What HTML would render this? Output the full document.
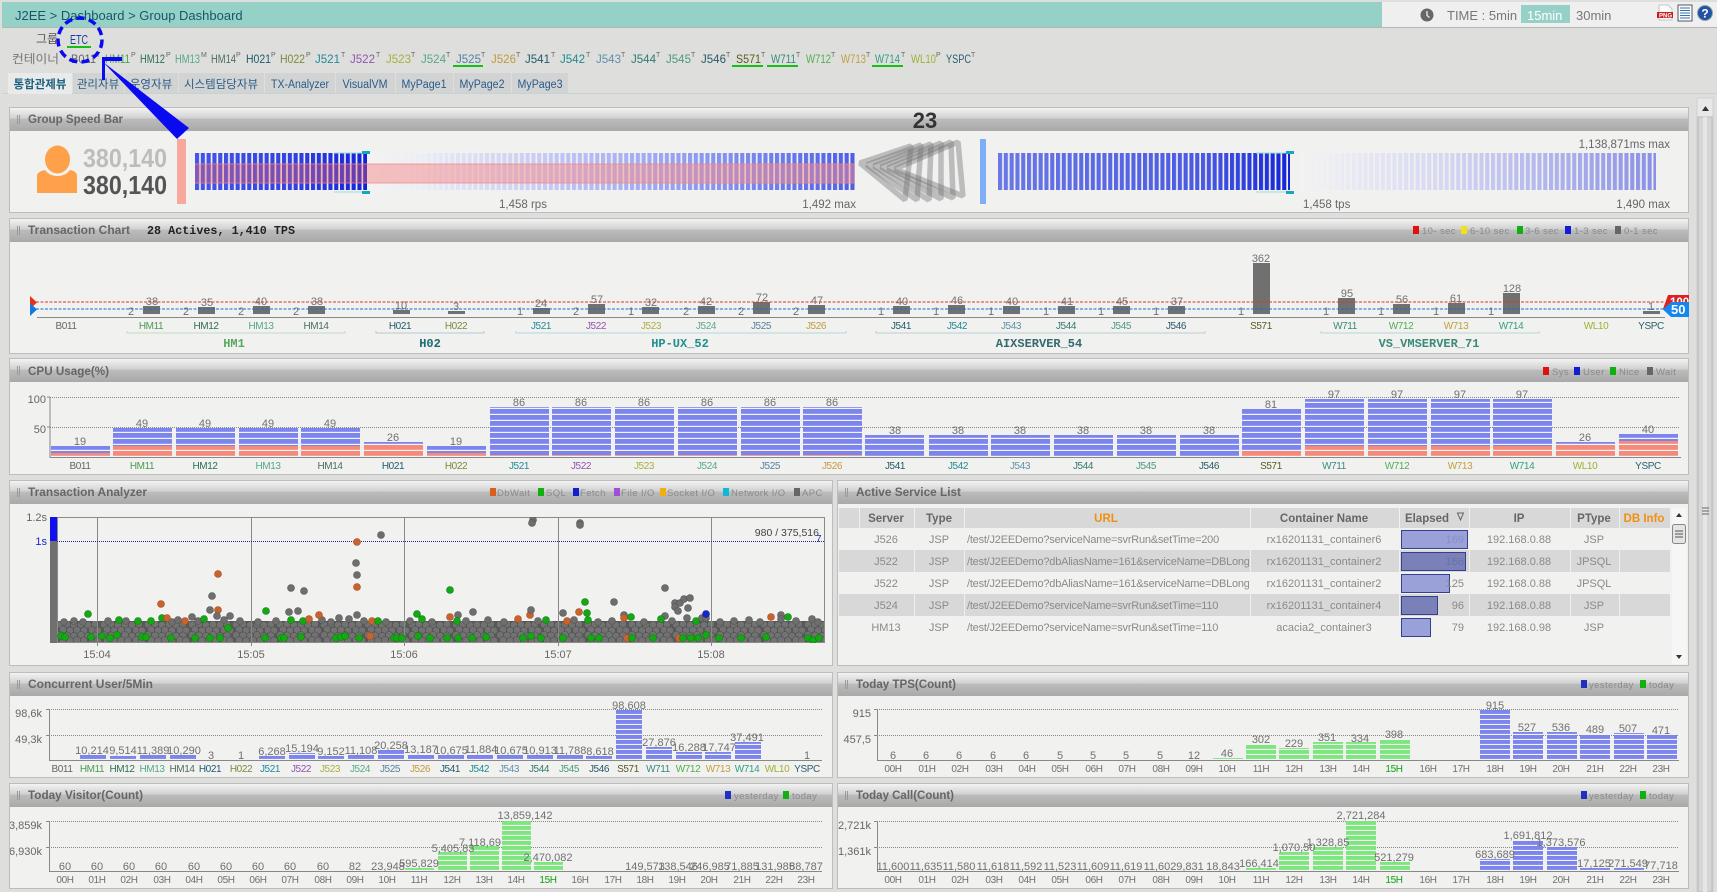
<!DOCTYPE html>
<html><head><meta charset="utf-8"><title>Group Dashboard</title>
<style>
html,body{margin:0;padding:0;background:#dededd;overflow:hidden}
svg{display:block}
text{font-family:"Liberation Sans","Noto Sans CJK KR",sans-serif;font-size:10.5px;fill:#666}
.t{font-size:12px;font-weight:bold;fill:#666}
.m{text-anchor:middle}.e{text-anchor:end}
.v{text-anchor:middle;font-size:11px;fill:#707070}
.a{text-anchor:middle;font-size:10px;letter-spacing:-.4px;fill:#707070}
.l{font-size:9.5px;letter-spacing:.4px;fill:#8a8a8a}
.s{font-size:7px}
.g13{font-size:13px}
.mono{font-family:"Liberation Mono",monospace;font-weight:bold;font-size:12px}
.gp{font-family:"Liberation Mono",monospace;font-weight:bold;font-size:12px;text-anchor:middle}
.td{font-size:11px;fill:#8a8a8a}
.url{letter-spacing:-.22px}
.th{font-size:11.5px;font-weight:bold;fill:#666;text-anchor:middle}
.k,.g,.o,.b{r:3.5px;stroke-width:.6}
.k{fill:#6e6e6e;stroke:#555}.g{fill:#14a814;stroke:#0c800c}.o{fill:#c8622e;stroke:#a64e22}.b{fill:#1428c8;stroke:#101c90}
</style></head><body>
<svg xmlns="http://www.w3.org/2000/svg" width="1717" height="892" viewBox="0 0 1717 892">
<defs>
<linearGradient id="hd" x1="0" y1="0" x2="0" y2="1"><stop offset="0" stop-color="#f3f3f3"/><stop offset=".46" stop-color="#cfcfcf"/><stop offset=".47" stop-color="#bcbcbc"/><stop offset="1" stop-color="#a9a9a9"/></linearGradient>
<linearGradient id="lb1"><stop offset="0" stop-color="#4454ea"/><stop offset=".6" stop-color="#2f3fe2"/><stop offset="1" stop-color="#1222da"/></linearGradient>
<linearGradient id="lb2"><stop offset="0" stop-color="#f3f3f3"/><stop offset=".1" stop-color="#eceef6"/><stop offset=".35" stop-color="#c8ccf5"/><stop offset=".7" stop-color="#8a96f0"/><stop offset="1" stop-color="#4d5ee8"/></linearGradient>
<linearGradient id="rb1"><stop offset="0" stop-color="#6a78e6"/><stop offset=".7" stop-color="#4a5ae2"/><stop offset="1" stop-color="#1424d8"/></linearGradient>
<linearGradient id="rb2"><stop offset="0" stop-color="#f3f3f3"/><stop offset=".1" stop-color="#ececf4"/><stop offset=".4" stop-color="#d6d8f2"/><stop offset="1" stop-color="#8a90e6"/></linearGradient>
<pattern id="gapL" patternUnits="userSpaceOnUse" x="195" y="0" width="5.8" height="10"><rect x="4.1" width="1.7" height="10" fill="#f1f1f0"/></pattern>
<pattern id="gapR" patternUnits="userSpaceOnUse" x="998" y="0" width="5.8" height="10"><rect x="4.1" width="1.7" height="10" fill="#f1f1f0"/></pattern>
<pattern id="bu6" patternUnits="userSpaceOnUse" x="0" y="457" width="10" height="6"><rect width="10" height="6" fill="#7c85ee"/><rect y="4.8" width="10" height="1.2" fill="#f4f4f4"/></pattern>
<pattern id="re6" patternUnits="userSpaceOnUse" x="0" y="457" width="10" height="6"><rect width="10" height="6" fill="#f58a7a"/><rect y="4.8" width="10" height="1.2" fill="#f4f4f4"/></pattern>
<pattern id="bu5" patternUnits="userSpaceOnUse" x="0" y="760" width="10" height="5"><rect width="10" height="5" fill="#7c85ee"/><rect y="3.9" width="10" height="1.1" fill="#f4f4f4"/></pattern>
<pattern id="gr5" patternUnits="userSpaceOnUse" x="0" y="760" width="10" height="5"><rect width="10" height="5" fill="#7ee67e"/><rect y="3.9" width="10" height="1.1" fill="#f4f4f4"/></pattern>
<pattern id="bu5b" patternUnits="userSpaceOnUse" x="0" y="871" width="10" height="5"><rect width="10" height="5" fill="#7c85ee"/><rect y="3.9" width="10" height="1.1" fill="#f4f4f4"/></pattern>
<pattern id="gr5b" patternUnits="userSpaceOnUse" x="0" y="871" width="10" height="5"><rect width="10" height="5" fill="#7ee67e"/><rect y="3.9" width="10" height="1.1" fill="#f4f4f4"/></pattern>
<pattern id="band" patternUnits="userSpaceOnUse" x="57" y="621" width="44" height="22">
<rect width="44" height="22" fill="#585858"/>
<g fill="#727272" stroke="#505050" stroke-width=".6">
<circle cx="3" cy="3.500" r="3.600"/><circle cx="10" cy="3" r="3.600"/><circle cx="17" cy="4" r="3.600"/><circle cx="24" cy="3.500" r="3.600"/><circle cx="31" cy="4" r="3.600"/><circle cx="38" cy="3" r="3.600"/>
<circle cx="6" cy="8.500" r="3.600"/><circle cx="13" cy="9.500" r="3.600"/><circle cx="20" cy="9" r="3.600"/><circle cx="27" cy="9.500" r="3.600"/><circle cx="35" cy="9" r="3.600"/><circle cx="41" cy="9.500" r="3.600"/>
<circle cx="3" cy="14" r="3.600"/><circle cx="10" cy="14.500" r="3.600"/><circle cx="17" cy="15" r="3.600"/><circle cx="24" cy="14" r="3.600"/><circle cx="31" cy="15" r="3.600"/><circle cx="38" cy="14.500" r="3.600"/>
<circle cx="6" cy="19" r="3.600"/><circle cx="13" cy="19.500" r="3.600"/><circle cx="20" cy="19" r="3.600"/><circle cx="27" cy="19.500" r="3.600"/><circle cx="35" cy="19" r="3.600"/><circle cx="41" cy="19.500" r="3.600"/>
</g></pattern>
<clipPath id="cL"><rect x="10" y="700" width="100" height="190"/></clipPath>
<clipPath id="cR"><rect x="838" y="780" width="100" height="110"/></clipPath>
<clipPath id="cU"><rect x="964" y="508" width="285" height="140"/></clipPath>
<clipPath id="cP"><rect x="57" y="517" width="768" height="126"/></clipPath>
</defs>

<!-- top bar -->
<rect x="0" y="0" width="1717" height="892" fill="#dededd"/>
<rect x="2" y="2" width="1380" height="25" fill="#96d1c7"/>
<rect x="1382" y="2" width="335" height="25" fill="#efefef"/>
<rect x="2" y="27" width="1715" height="1" fill="#b5b5b5"/>
<text x="15" y="20" class="g13" style="fill:#15586c">J2EE &gt; Dashboard &gt; Group Dashboard</text>
<circle cx="1427" cy="15" r="6.5" fill="#666"/><path d="M1427 11v4.5l2.5 2" stroke="#eee" stroke-width="1.3" fill="none"/>
<text x="1447" y="20" class="g13" style="fill:#777">TIME : 5min</text>
<rect x="1521" y="5" width="49" height="18" fill="#96d1c7"/>
<text x="1527" y="20" class="g13" style="fill:#fff">15min</text>
<text x="1576" y="20" class="g13" style="fill:#777">30min</text>
<path d="M1659 5h9l4 4v11h-13z" fill="#fafafa" stroke="#bbb" stroke-width=".8"/>
<rect x="1657" y="12" width="16" height="6" fill="#c81e1e"/>
<text x="1659" y="17.5" style="font-size:6px;font-weight:bold;fill:#fff">PNG</text>
<rect x="1678" y="5" width="14" height="16" fill="#fbfbfb" stroke="#445" stroke-width=".9"/>
<path d="M1680 8h10M1680 10.5h10M1680 13h10M1680 15.5h10M1680 18h10" stroke="#3a70b0" stroke-width="1"/>
<circle cx="1705" cy="13" r="7.5" fill="#2450a8" stroke="#8aa" stroke-width="1"/>
<text x="1705" y="17.5" class="m" style="font-size:12px;font-weight:bold;fill:#fff">?</text>

<!-- group row -->
<text x="36" y="43" style="font-size:12px;fill:#555">그룹</text>
<text x="70" y="44" style="font-size:13px;fill:#1a3fa0" textLength="18" lengthAdjust="spacingAndGlyphs">ETC</text>
<rect x="67" y="46" width="24" height="2" fill="#14c014"/>

<!-- container row -->
<g style="font-size:12px">
<text x="12" y="63" style="font-size:12px;fill:#777" textLength="47" lengthAdjust="spacingAndGlyphs">컨테이너</text>
<text x="71" y="63" style="font-size:12px;fill:#666" textLength="25" lengthAdjust="spacingAndGlyphs">B011</text><text x="96" y="57" class="s">T</text>
<text x="105" y="63" style="font-size:12px;fill:#4c9b50" textLength="25" lengthAdjust="spacingAndGlyphs">HM11</text><text x="131" y="57" class="s">P</text>
<text x="140" y="63" style="font-size:12px;fill:#2e6e55" textLength="25" lengthAdjust="spacingAndGlyphs">HM12</text><text x="166" y="57" class="s">P</text>
<text x="175" y="63" style="font-size:12px;fill:#55a88a" textLength="25" lengthAdjust="spacingAndGlyphs">HM13</text><text x="201" y="57" class="s">M</text>
<text x="211" y="63" style="font-size:12px;fill:#4e6e62" textLength="25" lengthAdjust="spacingAndGlyphs">HM14</text><text x="236" y="57" class="s">P</text>
<text x="246" y="63" style="font-size:12px;fill:#1e5a6e" textLength="25" lengthAdjust="spacingAndGlyphs">H021</text><text x="271" y="57" class="s">P</text>
<text x="280" y="63" style="font-size:12px;fill:#7a8a3a" textLength="25" lengthAdjust="spacingAndGlyphs">H022</text><text x="306" y="57" class="s">P</text>
<text x="315" y="63" style="font-size:12px;fill:#1e8a9a" textLength="25" lengthAdjust="spacingAndGlyphs">J521</text><text x="341" y="57" class="s">T</text>
<text x="350" y="63" style="font-size:12px;fill:#9055b0" textLength="25" lengthAdjust="spacingAndGlyphs">J522</text><text x="376" y="57" class="s">T</text>
<text x="386" y="63" style="font-size:12px;fill:#a8b040" textLength="25" lengthAdjust="spacingAndGlyphs">J523</text><text x="411" y="57" class="s">T</text>
<text x="421" y="63" style="font-size:12px;fill:#58a888" textLength="25" lengthAdjust="spacingAndGlyphs">J524</text><text x="446" y="57" class="s">T</text>
<text x="456" y="63" style="font-size:12px;fill:#5580a0" textLength="25" lengthAdjust="spacingAndGlyphs">J525</text><text x="481" y="57" class="s">T</text>
<text x="491" y="63" style="font-size:12px;fill:#c09a40" textLength="25" lengthAdjust="spacingAndGlyphs">J526</text><text x="516" y="57" class="s">T</text>
<text x="525" y="63" style="font-size:12px;fill:#1e5a68" textLength="25" lengthAdjust="spacingAndGlyphs">J541</text><text x="551" y="57" class="s">T</text>
<text x="560" y="63" style="font-size:12px;fill:#1e8a90" textLength="25" lengthAdjust="spacingAndGlyphs">J542</text><text x="586" y="57" class="s">T</text>
<text x="596" y="63" style="font-size:12px;fill:#5f90a8" textLength="25" lengthAdjust="spacingAndGlyphs">J543</text><text x="621" y="57" class="s">T</text>
<text x="631" y="63" style="font-size:12px;fill:#2e7a70" textLength="25" lengthAdjust="spacingAndGlyphs">J544</text><text x="656" y="57" class="s">T</text>
<text x="666" y="63" style="font-size:12px;fill:#4a9a80" textLength="25" lengthAdjust="spacingAndGlyphs">J545</text><text x="691" y="57" class="s">T</text>
<text x="701" y="63" style="font-size:12px;fill:#285a68" textLength="25" lengthAdjust="spacingAndGlyphs">J546</text><text x="726" y="57" class="s">T</text>
<text x="736" y="63" style="font-size:12px;fill:#5a5a20" textLength="25" lengthAdjust="spacingAndGlyphs">S571</text><text x="761" y="57" class="s">T</text>
<text x="771" y="63" style="font-size:12px;fill:#3a8a80" textLength="25" lengthAdjust="spacingAndGlyphs">W711</text><text x="796" y="57" class="s">T</text>
<text x="806" y="63" style="font-size:12px;fill:#50b050" textLength="25" lengthAdjust="spacingAndGlyphs">W712</text><text x="831" y="57" class="s">T</text>
<text x="841" y="63" style="font-size:12px;fill:#c0a040" textLength="25" lengthAdjust="spacingAndGlyphs">W713</text><text x="866" y="57" class="s">T</text>
<text x="875" y="63" style="font-size:12px;fill:#30a080" textLength="25" lengthAdjust="spacingAndGlyphs">W714</text><text x="901" y="57" class="s">T</text>
<text x="911" y="63" style="font-size:12px;fill:#a0b030" textLength="25" lengthAdjust="spacingAndGlyphs">WL10</text><text x="936" y="57" class="s">P</text>
<text x="946" y="63" style="font-size:12px;fill:#2a6070" textLength="25" lengthAdjust="spacingAndGlyphs">YSPC</text><text x="971" y="57" class="s">T</text>
</g>
<rect x="453" y="65" width="30" height="2" fill="#14c014"/><rect x="732" y="65" width="31" height="2" fill="#14c014"/><rect x="767" y="65" width="31" height="2" fill="#14c014"/><rect x="872" y="65" width="31" height="2" fill="#14c014"/>

<!-- tabs -->
<rect x="2" y="93" width="1715" height="1" fill="#c6d2d6"/>
<rect x="8" y="73" width="64" height="21" fill="#e9ebeb"/>
<rect x="73" y="73" width="51" height="20" fill="#d2d4d4"/><rect x="125" y="73" width="53" height="20" fill="#d2d4d4"/><rect x="179" y="73" width="85" height="20" fill="#d2d4d4"/><rect x="265" y="73" width="70" height="20" fill="#d2d4d4"/><rect x="336" y="73" width="59" height="20" fill="#d2d4d4"/><rect x="396" y="73" width="57" height="20" fill="#d2d4d4"/><rect x="454" y="73" width="57" height="20" fill="#d2d4d4"/><rect x="512" y="73" width="56" height="20" fill="#d2d4d4"/>
<g style="font-size:11.5px">
<text x="40" y="88" class="m" style="font-size:11.5px;font-weight:bold;fill:#1d6080">통합관제뷰</text>
<text x="98" y="88" class="m" style="font-size:11.5px;fill:#2a5a88">관리자뷰</text>
<text x="151" y="88" class="m" style="font-size:11.5px;fill:#2a5a88">운영자뷰</text>
<text x="221" y="88" class="m" style="font-size:11.5px;fill:#2a5a88">시스템담당자뷰</text>
<text x="300" y="88" class="m" style="font-size:11.5px;fill:#2a5a88" textLength="58" lengthAdjust="spacingAndGlyphs">TX-Analyzer</text>
<text x="365" y="88" class="m" style="font-size:11.5px;fill:#2a5a88" textLength="45" lengthAdjust="spacingAndGlyphs">VisualVM</text>
<text x="424" y="88" class="m" style="font-size:11.5px;fill:#2a5a88" textLength="45" lengthAdjust="spacingAndGlyphs">MyPage1</text>
<text x="482" y="88" class="m" style="font-size:11.5px;fill:#2a5a88" textLength="45" lengthAdjust="spacingAndGlyphs">MyPage2</text>
<text x="540" y="88" class="m" style="font-size:11.5px;fill:#2a5a88" textLength="45" lengthAdjust="spacingAndGlyphs">MyPage3</text>
</g>

<!-- outer scrollbar -->
<rect x="1697" y="98" width="16" height="794" fill="#e8e8e8" stroke="#cfcfcf"/>
<path d="M1702 111l3.5-5 3.5 5z" fill="#333"/>
<rect x="1698" y="117" width="14" height="775" fill="#d6d6d6" stroke="#bbb"/>
<rect x="1703" y="117" width="4" height="775" fill="#e6e6e6"/>
<path d="M1702 508h7M1702 511h7M1702 514h7" stroke="#666" stroke-width="1"/>

<!-- panels -->
<g stroke="#bdbdbd" fill="#f1f1f0">
<rect x="9.5" y="107.5" width="1679" height="105"/>
<rect x="9.5" y="218.5" width="1679" height="135"/>
<rect x="9.5" y="358.5" width="1679" height="116"/>
<rect x="9.5" y="480.5" width="823" height="185"/>
<rect x="837.5" y="480.5" width="851" height="185"/>
<rect x="9.5" y="672.5" width="823" height="105"/>
<rect x="837.5" y="672.5" width="851" height="105"/>
<rect x="9.5" y="783.5" width="823" height="105"/>
<rect x="837.5" y="783.5" width="851" height="105"/>
</g>
<g fill="url(#hd)">
<rect x="10" y="108" width="1678" height="23"/>
<rect x="10" y="219" width="1678" height="23"/>
<rect x="10" y="359" width="1678" height="23"/>
<rect x="10" y="481" width="822" height="23"/>
<rect x="838" y="481" width="850" height="23"/>
<rect x="10" y="673" width="822" height="23"/>
<rect x="838" y="673" width="850" height="23"/>
<rect x="10" y="784" width="822" height="23"/>
<rect x="838" y="784" width="850" height="23"/>
</g>
<g stroke="#999" stroke-width="1">
<path d="M17.5 115v9M19.5 115v9M17.5 226v9M19.5 226v9M17.5 366v9M19.5 366v9M17.5 488v9M19.5 488v9M17.5 680v9M19.5 680v9M17.5 791v9M19.5 791v9M845.5 488v9M847.5 488v9M845.5 680v9M847.5 680v9M845.5 791v9M847.5 791v9"/>
</g>
<text x="28" y="123" class="t" textLength="95" lengthAdjust="spacingAndGlyphs">Group Speed Bar</text>
<text x="28" y="234" class="t" textLength="102" lengthAdjust="spacingAndGlyphs">Transaction Chart</text>
<text x="147" y="234" class="mono" style="fill:#222" textLength="148" lengthAdjust="spacingAndGlyphs">28 Actives, 1,410 TPS</text>
<text x="28" y="375" class="t" textLength="81" lengthAdjust="spacingAndGlyphs">CPU Usage(%)</text>
<text x="28" y="496" class="t" textLength="119" lengthAdjust="spacingAndGlyphs">Transaction Analyzer</text>
<text x="856" y="496" class="t" textLength="105" lengthAdjust="spacingAndGlyphs">Active Service List</text>
<text x="28" y="688" class="t" textLength="125" lengthAdjust="spacingAndGlyphs">Concurrent User/5Min</text>
<text x="856" y="688" class="t" textLength="100" lengthAdjust="spacingAndGlyphs">Today TPS(Count)</text>
<text x="28" y="799" class="t" textLength="115" lengthAdjust="spacingAndGlyphs">Today Visitor(Count)</text>
<text x="856" y="799" class="t" textLength="98" lengthAdjust="spacingAndGlyphs">Today Call(Count)</text>

<!-- Speed bar -->
<ellipse cx="57.5" cy="159.5" rx="12.5" ry="14" fill="#ffa04a"/>
<path d="M37 193v-17c0-3 3-5 8-6 3 4 7 6 12.500 6s9.500-2 12.500-6c5 1 7 3 7 6v17z" fill="#ffa04a"/>
<text x="83" y="167" style="font-size:26px;font-weight:bold;fill:#bdbdbd" textLength="84" lengthAdjust="spacingAndGlyphs">380,140</text>
<text x="83" y="194" style="font-size:26px;font-weight:bold;fill:#555" textLength="84" lengthAdjust="spacingAndGlyphs">380,140</text>
<rect x="177" y="139" width="9" height="65" fill="#f9a89e"/>
<rect x="195" y="153" width="172" height="37" fill="url(#lb1)"/>
<rect x="367" y="153" width="488" height="37" fill="url(#lb2)"/>
<rect x="195" y="153" width="660" height="37" fill="url(#gapL)"/>
<rect x="195" y="164" width="172" height="19" fill="#f06060" fill-opacity=".38"/>
<rect x="367" y="164" width="488" height="19" fill="#f58c8c" fill-opacity=".5"/>
<path d="M195 164h660M195 183h660" stroke="#e88" stroke-width=".8"/>
<rect x="362" y="151" width="8" height="3" fill="#14a8b8"/><rect x="362" y="191" width="8" height="3" fill="#14a8b8"/>
<path d="M334 153h28M334 192h28" stroke="#9adde0" stroke-width="1"/>
<text x="499" y="208" style="font-size:11.5px">1,458 rps</text>
<text x="856" y="208" class="e" style="font-size:11.5px">1,492 max</text>
<g fill="none" stroke="#6e6e6e" stroke-opacity=".4" stroke-width="5.5" stroke-linejoin="bevel">
<path d="M860 163L911 146L905 200Z"/>
<path d="M867 165L921 145L917 200Z"/>
<path d="M874 166L931 144L929 200Z"/>
<path d="M881 167L941 143L941 199Z"/>
<path d="M888 168L951 142L953 198Z"/>
<path d="M895 169L958 142L963 196Z"/>
</g>
<text x="925" y="128" class="m" style="font-size:22px;font-weight:bold;fill:#333">23</text>
<rect x="980" y="139" width="6" height="65" fill="#80aef5"/>
<rect x="998" y="153" width="292" height="37" fill="url(#rb1)"/>
<rect x="1300" y="153" width="356" height="37" fill="url(#rb2)"/>
<rect x="998" y="153" width="658" height="37" fill="url(#gapR)"/>
<rect x="1286" y="151" width="8" height="3" fill="#14a8b8"/><rect x="1286" y="191" width="8" height="3" fill="#14a8b8"/>
<path d="M1256 153h30M1256 192h30" stroke="#9adde0" stroke-width="1"/>
<text x="1670" y="148" class="e" style="font-size:11.5px">1,138,871ms max</text>
<text x="1303" y="208" style="font-size:11.5px">1,458 tps</text>
<text x="1670" y="208" class="e" style="font-size:11.5px">1,490 max</text>

<!-- Transaction chart legend -->
<rect x="1413" y="226" width="6" height="8" fill="#e01010"/><text x="1422" y="234" class="l">10- sec</text>
<rect x="1461" y="226" width="6" height="8" fill="#f0e020"/><text x="1470" y="234" class="l">6-10 sec</text>
<rect x="1517" y="226" width="6" height="8" fill="#10b010"/><text x="1525" y="234" class="l">3-6 sec</text>
<rect x="1565" y="226" width="6" height="8" fill="#1020d0"/><text x="1574" y="234" class="l">1-3 sec</text>
<rect x="1615" y="226" width="6" height="8" fill="#666"/><text x="1624" y="234" class="l">0-1 sec</text>

<!-- Transaction bars -->
<g fill="#707070">
<rect x="143" y="306" width="17" height="8"/><rect x="198" y="307" width="17" height="7"/><rect x="253" y="306" width="17" height="8"/><rect x="308" y="306" width="17" height="8"/>
<rect x="393" y="310" width="17" height="4"/><rect x="448" y="311" width="17" height="3"/>
<rect x="533" y="308" width="17" height="6"/><rect x="588" y="304" width="17" height="10"/><rect x="642" y="307" width="17" height="7"/><rect x="698" y="306" width="17" height="8"/><rect x="753" y="302" width="17" height="12"/><rect x="808" y="305" width="17" height="9"/>
<rect x="893" y="306" width="17" height="8"/><rect x="948" y="305" width="17" height="9"/><rect x="1003" y="306" width="17" height="8"/><rect x="1058" y="306" width="17" height="8"/><rect x="1113" y="306" width="17" height="8"/><rect x="1168" y="306" width="17" height="8"/>
<rect x="1253" y="263" width="17" height="51"/><rect x="1338" y="298" width="17" height="16"/><rect x="1393" y="304" width="17" height="10"/><rect x="1448" y="303" width="17" height="11"/><rect x="1503" y="293" width="17" height="21"/><rect x="1643" y="311" width="17" height="3"/>
</g>
<g class="vals">
<text x="152" y="305" class="v">38</text><text x="207" y="306" class="v">35</text><text x="261" y="305" class="v">40</text><text x="317" y="305" class="v">38</text><text x="401" y="309" class="v">10</text><text x="456" y="310" class="v">3</text><text x="541" y="307" class="v">24</text><text x="597" y="303" class="v">57</text><text x="651" y="306" class="v">32</text><text x="706" y="305" class="v">42</text><text x="762" y="301" class="v">72</text><text x="817" y="304" class="v">47</text>
<text x="902" y="305" class="v">40</text><text x="957" y="304" class="v">46</text><text x="1012" y="305" class="v">40</text><text x="1067" y="305" class="v">41</text><text x="1122" y="305" class="v">45</text><text x="1177" y="305" class="v">37</text><text x="1261" y="262" class="v">362</text><text x="1347" y="297" class="v">95</text><text x="1402" y="303" class="v">56</text><text x="1456" y="302" class="v">61</text><text x="1512" y="292" class="v">128</text><text x="1651" y="310" class="v">1</text>
</g>
<g>
<text x="131" y="315" class="v">2</text><text x="186" y="315" class="v">2</text><text x="241" y="315" class="v">2</text><text x="296" y="315" class="v">2</text><text x="520" y="315" class="v">1</text><text x="576" y="315" class="v">2</text><text x="631" y="315" class="v">1</text><text x="686" y="315" class="v">2</text><text x="741" y="315" class="v">2</text><text x="796" y="315" class="v">2</text><text x="881" y="315" class="v">1</text><text x="936" y="315" class="v">1</text><text x="991" y="315" class="v">1</text><text x="1046" y="315" class="v">1</text><text x="1101" y="315" class="v">1</text><text x="1156" y="315" class="v">1</text><text x="1241" y="315" class="v">1</text><text x="1326" y="315" class="v">1</text><text x="1381" y="315" class="v">1</text><text x="1436" y="315" class="v">1</text><text x="1491" y="315" class="v">1</text>
</g>
<path d="M36 302H1664" stroke="#d0402a" stroke-width="1" stroke-dasharray="3 1.5"/>
<path d="M36 309H1664" stroke="#1a6ad0" stroke-width="1" stroke-dasharray="3 1.5"/>
<path d="M37 317.500H1665" stroke="#888" stroke-width="1"/>
<path d="M30 296l7 6.500-7 6.500z" fill="#e8301a"/><path d="M30 303l7 6.500-7 6.500z" fill="#1478e0"/>
<path d="M1668 295h21v14h-26z" fill="#e02020"/><text x="1670" y="306" style="font-size:11.5px;font-weight:bold;fill:#fff">100</text>
<path d="M1671 302h18v15h-18l-8-7.500z" fill="#1488ee"/><text x="1671" y="314" style="font-size:13px;font-weight:bold;fill:#fff">50</text>
<g>
<text x="66" y="329" class="a" style="fill:#666">B011</text><text x="151" y="329" class="a" style="fill:#4c9b50">HM11</text><text x="206" y="329" class="a" style="fill:#2e6e55">HM12</text><text x="261" y="329" class="a" style="fill:#55a88a">HM13</text><text x="316" y="329" class="a" style="fill:#4e6e62">HM14</text><text x="400" y="329" class="a" style="fill:#1e5a6e">H021</text><text x="456" y="329" class="a" style="fill:#7a8a3a">H022</text><text x="541" y="329" class="a" style="fill:#1e8a9a">J521</text><text x="596" y="329" class="a" style="fill:#9055b0">J522</text><text x="651" y="329" class="a" style="fill:#a8b040">J523</text><text x="706" y="329" class="a" style="fill:#58a888">J524</text><text x="761" y="329" class="a" style="fill:#5580a0">J525</text><text x="816" y="329" class="a" style="fill:#c09a40">J526</text><text x="901" y="329" class="a" style="fill:#1e5a68">J541</text><text x="957" y="329" class="a" style="fill:#1e8a90">J542</text><text x="1011" y="329" class="a" style="fill:#5f90a8">J543</text><text x="1066" y="329" class="a" style="fill:#2e7a70">J544</text><text x="1121" y="329" class="a" style="fill:#4a9a80">J545</text><text x="1176" y="329" class="a" style="fill:#285a68">J546</text><text x="1261" y="329" class="a" style="fill:#5a5a20">S571</text><text x="1345" y="329" class="a" style="fill:#3a8a80">W711</text><text x="1401" y="329" class="a" style="fill:#50b050">W712</text><text x="1456" y="329" class="a" style="fill:#c0a040">W713</text><text x="1511" y="329" class="a" style="fill:#30a080">W714</text><text x="1596" y="329" class="a" style="fill:#a0b030">WL10</text><text x="1651" y="329" class="a" style="fill:#2a6070">YSPC</text>
</g>
<g fill="none" stroke-width="1">
<path d="M127 331v2H345v-2" stroke="#c2dcc4"/><path d="M376 331v2H484v-2" stroke="#b6ccd0"/><path d="M516 331v2H846v-2" stroke="#b4d8dc"/><path d="M876 331v2H1205v-2" stroke="#bcd0d2"/><path d="M1321 331v2H1539v-2" stroke="#bcd8d2"/>
</g>
<text x="234" y="347" class="gp" style="fill:#58a860">HM1</text>
<text x="430" y="347" class="gp" style="fill:#1a6a70">H02</text>
<text x="680" y="347" class="gp" style="fill:#1e9090">HP-UX_52</text>
<text x="1039" y="347" class="gp" style="fill:#336a70">AIXSERVER_54</text>
<text x="1429" y="347" class="gp" style="fill:#3a8a78">VS_VMSERVER_71</text>

<!-- CPU -->
<rect x="1543" y="367" width="6" height="8" fill="#e01010"/><text x="1552" y="375" class="l">Sys</text>
<rect x="1574" y="367" width="6" height="8" fill="#1020d0"/><text x="1583" y="375" class="l">User</text>
<rect x="1610" y="367" width="6" height="8" fill="#10b010"/><text x="1619" y="375" class="l">Nice</text>
<rect x="1647" y="367" width="6" height="8" fill="#666"/><text x="1656" y="375" class="l">Wait</text>
<path d="M50 397.500H1680M50 427.500H1680" stroke="#888" stroke-width="1" stroke-dasharray="1 1"/>
<path d="M50 397V457.500H1681" stroke="#888" fill="none"/><path d="M47 397h3M47 427h3" stroke="#888"/>
<text x="46" y="403" class="e" style="font-size:11px">100</text><text x="46" y="433" class="e" style="font-size:11px">50</text>
<g fill="url(#bu6)">
<rect x="51" y="446" width="59" height="11"/><rect x="113" y="428" width="59" height="29"/><rect x="176" y="428" width="59" height="29"/><rect x="239" y="428" width="59" height="29"/><rect x="301" y="428" width="59" height="29"/><rect x="364" y="442" width="59" height="15"/><rect x="427" y="446" width="59" height="11"/><rect x="490" y="407" width="59" height="50"/><rect x="552" y="407" width="59" height="50"/><rect x="615" y="407" width="59" height="50"/><rect x="678" y="407" width="59" height="50"/><rect x="741" y="407" width="59" height="50"/><rect x="803" y="407" width="59" height="50"/><rect x="865" y="435" width="59" height="22"/><rect x="929" y="435" width="59" height="22"/><rect x="991" y="435" width="59" height="22"/><rect x="1054" y="435" width="59" height="22"/><rect x="1117" y="435" width="59" height="22"/><rect x="1180" y="435" width="59" height="22"/><rect x="1242" y="409" width="59" height="48"/><rect x="1305" y="399" width="59" height="58"/><rect x="1368" y="399" width="59" height="58"/><rect x="1431" y="399" width="59" height="58"/><rect x="1493" y="399" width="59" height="58"/><rect x="1556" y="442" width="59" height="15"/><rect x="1619" y="434" width="59" height="23"/>
</g>
<g fill="url(#re6)">
<rect x="51" y="453" width="59" height="4"/><rect x="113" y="446" width="59" height="11"/><rect x="176" y="446" width="59" height="11"/><rect x="239" y="446" width="59" height="11"/><rect x="301" y="446" width="59" height="11"/><rect x="364" y="444" width="59" height="13"/><rect x="427" y="453" width="59" height="4"/><rect x="490" y="455" width="59" height="2"/><rect x="552" y="455" width="59" height="2"/><rect x="615" y="455" width="59" height="2"/><rect x="678" y="455" width="59" height="2"/><rect x="741" y="455" width="59" height="2"/><rect x="803" y="455" width="59" height="2"/><rect x="1242" y="450" width="59" height="7"/><rect x="1305" y="446" width="59" height="11"/><rect x="1368" y="446" width="59" height="11"/><rect x="1431" y="446" width="59" height="11"/><rect x="1493" y="446" width="59" height="11"/><rect x="1556" y="444" width="59" height="13"/><rect x="1619" y="441" width="59" height="16"/>
</g>
<g>
<text x="80" y="445" class="v">19</text><text x="142" y="427" class="v">49</text><text x="205" y="427" class="v">49</text><text x="268" y="427" class="v">49</text><text x="330" y="427" class="v">49</text><text x="393" y="441" class="v">26</text><text x="456" y="445" class="v">19</text><text x="519" y="406" class="v">86</text><text x="581" y="406" class="v">86</text><text x="644" y="406" class="v">86</text><text x="707" y="406" class="v">86</text><text x="770" y="406" class="v">86</text><text x="832" y="406" class="v">86</text><text x="895" y="434" class="v">38</text><text x="958" y="434" class="v">38</text><text x="1020" y="434" class="v">38</text><text x="1083" y="434" class="v">38</text><text x="1146" y="434" class="v">38</text><text x="1209" y="434" class="v">38</text><text x="1271" y="408" class="v">81</text><text x="1334" y="398" class="v">97</text><text x="1397" y="398" class="v">97</text><text x="1460" y="398" class="v">97</text><text x="1522" y="398" class="v">97</text><text x="1585" y="441" class="v">26</text><text x="1648" y="433" class="v">40</text>
</g>
<g>
<text x="80" y="469" class="a" style="fill:#666">B011</text><text x="142" y="469" class="a" style="fill:#4c9b50">HM11</text><text x="205" y="469" class="a" style="fill:#2e6e55">HM12</text><text x="268" y="469" class="a" style="fill:#55a88a">HM13</text><text x="330" y="469" class="a" style="fill:#4e6e62">HM14</text><text x="393" y="469" class="a" style="fill:#1e5a6e">H021</text><text x="456" y="469" class="a" style="fill:#7a8a3a">H022</text><text x="519" y="469" class="a" style="fill:#1e8a9a">J521</text><text x="581" y="469" class="a" style="fill:#9055b0">J522</text><text x="644" y="469" class="a" style="fill:#a8b040">J523</text><text x="707" y="469" class="a" style="fill:#58a888">J524</text><text x="770" y="469" class="a" style="fill:#5580a0">J525</text><text x="832" y="469" class="a" style="fill:#c09a40">J526</text><text x="895" y="469" class="a" style="fill:#1e5a68">J541</text><text x="958" y="469" class="a" style="fill:#1e8a90">J542</text><text x="1020" y="469" class="a" style="fill:#5f90a8">J543</text><text x="1083" y="469" class="a" style="fill:#2e7a70">J544</text><text x="1146" y="469" class="a" style="fill:#4a9a80">J545</text><text x="1209" y="469" class="a" style="fill:#285a68">J546</text><text x="1271" y="469" class="a" style="fill:#5a5a20">S571</text><text x="1334" y="469" class="a" style="fill:#3a8a80">W711</text><text x="1397" y="469" class="a" style="fill:#50b050">W712</text><text x="1460" y="469" class="a" style="fill:#c0a040">W713</text><text x="1522" y="469" class="a" style="fill:#30a080">W714</text><text x="1585" y="469" class="a" style="fill:#a0b030">WL10</text><text x="1648" y="469" class="a" style="fill:#2a6070">YSPC</text>
</g>

<!-- Transaction Analyzer -->
<rect x="490" y="488" width="6" height="8" fill="#d8601c"/><text x="497" y="496" class="l">DbWait</text>
<rect x="538" y="488" width="6" height="8" fill="#10b010"/><text x="546" y="496" class="l">SQL</text>
<rect x="573" y="488" width="6" height="8" fill="#1020d0"/><text x="580" y="496" class="l">Fetch</text>
<rect x="614" y="488" width="6" height="8" fill="#a050d8"/><text x="621" y="496" class="l">File I/O</text>
<rect x="660" y="488" width="6" height="8" fill="#f0b010"/><text x="667" y="496" class="l">Socket I/O</text>
<rect x="723" y="488" width="6" height="8" fill="#10b8d8"/><text x="731" y="496" class="l">Network I/O</text>
<rect x="794" y="488" width="6" height="8" fill="#666"/><text x="802" y="496" class="l">APC</text>
<rect x="57" y="621" width="768" height="22" fill="url(#band)"/>
<rect x="57.500" y="517.500" width="767" height="125" fill="none" stroke="#8a8a8a"/>
<rect x="50" y="517" width="7" height="24" fill="#1010f0"/><rect x="50" y="541" width="7" height="102" fill="#707070"/>
<path d="M97.500 517V646M251.500 517V646M404.500 517V646M558.500 517V646M711.500 517V646" stroke="#888" stroke-width="1"/>
<path d="M57 541.500H825" stroke="#2020a0" stroke-dasharray="1 1"/>
<text x="47" y="521" class="e" style="font-size:11px">1.2s</text>
<text x="47" y="545" class="e" style="font-size:11px;fill:#1428c8">1s</text>
<text x="97" y="658" class="m" style="font-size:11px">15:04</text><text x="251" y="658" class="m" style="font-size:11px">15:05</text><text x="404" y="658" class="m" style="font-size:11px">15:06</text><text x="558" y="658" class="m" style="font-size:11px">15:07</text><text x="711" y="658" class="m" style="font-size:11px">15:08</text>
<text x="819" y="536" class="e" style="font-size:10.5px;fill:#444">980 / 375,516</text>
<text x="816" y="542" style="font-size:10px;fill:#2233a0">7</text>
<g clip-path="url(#cP)">
<circle class="k" cx="64" cy="622"/><circle class="k" cx="74" cy="621"/><circle class="k" cx="83" cy="622"/><circle class="k" cx="108" cy="621"/><circle class="k" cx="126" cy="621"/><circle class="k" cx="172" cy="622"/><circle class="k" cx="178" cy="620"/><circle class="k" cx="198" cy="621"/><circle class="k" cx="224" cy="620"/><circle class="k" cx="240" cy="621"/><circle class="k" cx="258" cy="622"/><circle class="k" cx="276" cy="621"/><circle class="k" cx="322" cy="620"/><circle class="k" cx="331" cy="622"/><circle class="k" cx="364" cy="621"/><circle class="k" cx="386" cy="622"/><circle class="k" cx="410" cy="621"/><circle class="k" cx="432" cy="622"/><circle class="k" cx="466" cy="621"/><circle class="k" cx="488" cy="620"/><circle class="k" cx="504" cy="622"/><circle class="k" cx="538" cy="621"/><circle class="k" cx="574" cy="620"/><circle class="k" cx="598" cy="622"/><circle class="k" cx="612" cy="621"/><circle class="k" cx="644" cy="622"/><circle class="k" cx="672" cy="621"/><circle class="k" cx="720" cy="622"/><circle class="k" cx="734" cy="621"/><circle class="k" cx="760" cy="622"/><circle class="k" cx="796" cy="621"/><circle class="k" cx="818" cy="622"/>
<circle class="g" cx="88" cy="614"/><circle class="o" cx="161" cy="604"/><circle class="k" cx="212" cy="596"/><circle class="o" cx="218" cy="574"/><circle class="k" cx="210" cy="610"/><circle class="o" cx="218" cy="610"/><circle class="k" cx="217" cy="616"/><circle class="g" cx="162" cy="618"/><circle class="o" cx="167" cy="618"/><circle class="o" cx="185" cy="621"/><circle class="g" cx="204" cy="619"/><circle class="k" cx="192" cy="617"/><circle class="k" cx="230" cy="616"/><circle class="g" cx="119" cy="620"/><circle class="g" cx="138" cy="621"/><circle class="g" cx="151" cy="621"/><circle class="g" cx="266" cy="611"/><circle class="k" cx="289" cy="612"/><circle class="k" cx="298" cy="611"/><circle class="k" cx="291" cy="588"/><circle class="k" cx="304" cy="591"/><circle class="g" cx="291" cy="620"/><circle class="g" cx="303" cy="621"/><circle class="o" cx="309" cy="619"/><circle class="o" cx="319" cy="615"/><circle class="o" cx="357" cy="542"/><circle class="k" cx="381" cy="535"/><circle class="k" cx="356" cy="563"/><circle class="k" cx="357" cy="575"/><circle class="o" cx="357" cy="587"/><circle class="k" cx="357" cy="615"/><circle class="o" cx="372" cy="621"/><circle class="g" cx="378" cy="621"/><circle class="k" cx="339" cy="618"/><circle class="k" cx="349" cy="619"/><circle class="g" cx="417" cy="614"/><circle class="g" cx="422" cy="619"/><circle class="g" cx="450" cy="590"/><circle class="o" cx="450" cy="617"/><circle class="k" cx="458" cy="615"/><circle class="g" cx="457" cy="621"/><circle class="k" cx="473" cy="612"/><circle class="k" cx="533" cy="520"/><circle class="k" cx="532" cy="523"/><circle class="k" cx="580" cy="523"/><circle class="k" cx="580" cy="525"/><circle class="o" cx="518" cy="619"/><circle class="o" cx="530" cy="615"/><circle class="k" cx="531" cy="610"/><circle class="g" cx="546" cy="620"/><circle class="k" cx="563" cy="613"/><circle class="o" cx="579" cy="612"/><circle class="g" cx="587" cy="613"/><circle class="g" cx="588" cy="620"/><circle class="o" cx="567" cy="621"/><circle class="g" cx="585" cy="602"/><circle class="k" cx="614" cy="602"/><circle class="k" cx="624" cy="615"/><circle class="o" cx="624" cy="618"/><circle class="g" cx="631" cy="617"/><circle class="k" cx="665" cy="588"/><circle class="k" cx="665" cy="616"/><circle class="g" cx="661" cy="619"/><circle class="k" cx="675" cy="603"/><circle class="k" cx="675" cy="607"/><circle class="k" cx="680" cy="603"/><circle class="k" cx="684" cy="599"/><circle class="k" cx="690" cy="598"/><circle class="k" cx="688" cy="608"/><circle class="k" cx="678" cy="611"/><circle class="k" cx="687" cy="618"/><circle class="g" cx="696" cy="621"/><circle class="k" cx="702" cy="618"/><circle class="k" cx="706" cy="618"/><circle class="b" cx="706" cy="614"/><circle class="o" cx="771" cy="617"/><circle class="k" cx="781" cy="615"/><circle class="g" cx="788" cy="617"/><circle class="k" cx="781" cy="619"/><circle class="k" cx="749" cy="620"/><circle class="k" cx="812" cy="619"/>
<circle class="g" cx="228" cy="628"/><circle class="o" cx="370" cy="636"/><circle class="o" cx="627" cy="638"/><circle class="o" cx="679" cy="638"/>
<circle class="g" cx="61" cy="636"/><circle class="g" cx="65" cy="637"/><circle class="g" cx="91" cy="637"/><circle class="g" cx="102" cy="636"/><circle class="g" cx="110" cy="638"/><circle class="g" cx="117" cy="635"/><circle class="g" cx="142" cy="637"/><circle class="g" cx="146" cy="637"/><circle class="g" cx="171" cy="638"/><circle class="g" cx="195" cy="638"/><circle class="g" cx="210" cy="638"/><circle class="g" cx="220" cy="638"/><circle class="g" cx="265" cy="638"/><circle class="g" cx="281" cy="638"/><circle class="g" cx="284" cy="638"/><circle class="g" cx="301" cy="637"/><circle class="g" cx="336" cy="638"/><circle class="g" cx="341" cy="637"/><circle class="g" cx="345" cy="636"/><circle class="g" cx="359" cy="638"/><circle class="g" cx="394" cy="638"/><circle class="g" cx="397" cy="638"/><circle class="g" cx="402" cy="638"/><circle class="g" cx="418" cy="636"/><circle class="g" cx="430" cy="638"/><circle class="g" cx="447" cy="638"/><circle class="g" cx="458" cy="638"/><circle class="g" cx="472" cy="638"/><circle class="g" cx="486" cy="637"/><circle class="g" cx="523" cy="638"/><circle class="g" cx="531" cy="636"/><circle class="g" cx="541" cy="638"/><circle class="g" cx="563" cy="638"/><circle class="g" cx="591" cy="638"/><circle class="g" cx="599" cy="638"/><circle class="g" cx="632" cy="638"/><circle class="g" cx="653" cy="638"/><circle class="g" cx="683" cy="638"/><circle class="g" cx="691" cy="638"/><circle class="g" cx="698" cy="638"/><circle class="g" cx="706" cy="635"/><circle class="g" cx="719" cy="638"/><circle class="g" cx="741" cy="638"/><circle class="g" cx="766" cy="637"/><circle class="g" cx="808" cy="638"/><circle class="g" cx="813" cy="640"/><circle class="g" cx="819" cy="638"/>
</g>

<!-- Active Service List -->
<rect x="839" y="508" width="831" height="20" fill="#d8d8d8"/>
<rect x="839" y="550" width="831" height="22" fill="#d8d8d8"/><rect x="839" y="594" width="831" height="22" fill="#d8d8d8"/>
<path d="M859.500 508V528M914.500 508V638M964.500 508V638M1250.500 508V638M1399.500 508V638M1469.500 508V638M1570.500 508V638M1619.500 508V638" stroke="#f0f0f0" stroke-width="1"/>
<text x="886" y="522" class="th">Server</text><text x="939" y="522" class="th">Type</text>
<text x="1106" y="522" class="th" style="fill:#f09010">URL</text>
<text x="1324" y="522" class="th">Container Name</text>
<text x="1427" y="522" class="th">Elapsed</text><path d="M1457.500 513h6l-3 7z" fill="none" stroke="#666"/>
<text x="1519" y="522" class="th">IP</text><text x="1594" y="522" class="th">PType</text><text x="1644" y="522" class="th" style="fill:#f09010">DB Info</text>
<rect x="1401.500" y="530.500" width="66" height="18" fill="#9aa0d8" stroke="#34408f"/>
<rect x="1401.500" y="552.500" width="64" height="18" fill="#7a80b8" stroke="#34408f"/>
<rect x="1401.500" y="574.500" width="48" height="18" fill="#9aa0d8" stroke="#34408f"/>
<rect x="1401.500" y="596.500" width="36" height="18" fill="#7a80b8" stroke="#34408f"/>
<rect x="1401.500" y="618.500" width="29" height="18" fill="#9aa0d8" stroke="#34408f"/>
<g class="rows">
<text x="886" y="543" class="td m">J526</text><text x="939" y="543" class="td m">JSP</text>
<text x="886" y="565" class="td m">J522</text><text x="939" y="565" class="td m">JSP</text>
<text x="886" y="587" class="td m">J522</text><text x="939" y="587" class="td m">JSP</text>
<text x="886" y="609" class="td m">J524</text><text x="939" y="609" class="td m">JSP</text>
<text x="886" y="631" class="td m">HM13</text><text x="939" y="631" class="td m">JSP</text>
<g clip-path="url(#cU)">
<text x="967" y="543" class="td url">/test/J2EEDemo?serviceName=svrRun&amp;setTime=200</text>
<text x="967" y="565" class="td url">/test/J2EEDemo?dbAliasName=161&amp;serviceName=DBLongSql</text>
<text x="967" y="587" class="td url">/test/J2EEDemo?dbAliasName=161&amp;serviceName=DBLongSql</text>
<text x="967" y="609" class="td url">/test/J2EEDemo?serviceName=svrRun&amp;setTime=110</text>
<text x="967" y="631" class="td url">/test/J2EEDemo?serviceName=svrRun&amp;setTime=110</text>
</g>
<text x="1324" y="543" class="td m">rx16201131_container6</text><text x="1324" y="565" class="td m">rx16201131_container2</text><text x="1324" y="587" class="td m">rx16201131_container2</text><text x="1324" y="609" class="td m">rx16201131_container4</text><text x="1324" y="631" class="td m">acacia2_container3</text>
<text x="1464" y="543" class="td e" style="fill:#8a8fc0">169</text><text x="1464" y="565" class="td e" style="fill:#6a70a8">166</text><text x="1464" y="587" class="td e">125</text><text x="1464" y="609" class="td e">96</text><text x="1464" y="631" class="td e">79</text>
<text x="1519" y="543" class="td m">192.168.0.88</text><text x="1519" y="565" class="td m">192.168.0.88</text><text x="1519" y="587" class="td m">192.168.0.88</text><text x="1519" y="609" class="td m">192.168.0.88</text><text x="1519" y="631" class="td m">192.168.0.98</text>
<text x="1594" y="543" class="td m">JSP</text><text x="1594" y="565" class="td m">JPSQL</text><text x="1594" y="587" class="td m">JPSQL</text><text x="1594" y="609" class="td m">JSP</text><text x="1594" y="631" class="td m">JSP</text>
</g>
<rect x="1672" y="508" width="14" height="156" fill="#f6f6f6"/>
<path d="M1676 517l3-4 3 4z" fill="#333"/><path d="M1676 655l3 4 3-4z" fill="#333"/>
<rect x="1672.500" y="524.500" width="13" height="19" rx="2" fill="#e4e4e4" stroke="#888"/>
<path d="M1675 531h8M1675 534h8M1675 537h8" stroke="#555"/>

<!-- Concurrent -->
<path d="M49 709.500H822M49 735.500H822" stroke="#888" stroke-dasharray="1 1"/>
<path d="M49.500 709V760.500H822" stroke="#888" fill="none"/><path d="M46 709.500h3M46 735.500h3" stroke="#888"/>
<text x="42" y="717" class="e" style="font-size:11px">98,6k</text><text x="42" y="743" class="e" style="font-size:11px">49,3k</text>
<g fill="url(#bu5)">
<rect x="80" y="755" width="26" height="5"/><rect x="110" y="756" width="26" height="4"/><rect x="140" y="755" width="26" height="5"/><rect x="170" y="755" width="26" height="5"/><rect x="259" y="756" width="26" height="4"/><rect x="289" y="753" width="26" height="7"/><rect x="318" y="756" width="26" height="4"/><rect x="348" y="755" width="26" height="5"/><rect x="378" y="750" width="26" height="10"/><rect x="408" y="754" width="26" height="6"/><rect x="438" y="755" width="26" height="5"/><rect x="467" y="754" width="26" height="6"/><rect x="497" y="755" width="26" height="5"/><rect x="527" y="755" width="26" height="5"/><rect x="557" y="755" width="26" height="5"/><rect x="586" y="756" width="26" height="4"/><rect x="616" y="710" width="26" height="50"/><rect x="646" y="747" width="26" height="13"/><rect x="676" y="752" width="26" height="8"/><rect x="705" y="752" width="26" height="8"/><rect x="735" y="742" width="26" height="18"/>
</g>
<g>
<text x="92" y="754" class="v">10,214</text><text x="123" y="754" class="v">9,514</text><text x="153" y="754" class="v">11,389</text><text x="184" y="754" class="v">10,290</text><text x="211" y="759" class="v">3</text><text x="241" y="759" class="v">1</text><text x="272" y="755" class="v">6,268</text><text x="302" y="752" class="v">15,194</text><text x="331" y="755" class="v">9,152</text><text x="361" y="754" class="v">11,108</text><text x="391" y="749" class="v">20,258</text><text x="421" y="753" class="v">13,187</text><text x="451" y="754" class="v">10,675</text><text x="481" y="753" class="v">11,884</text><text x="511" y="754" class="v">10,675</text><text x="540" y="754" class="v">10,913</text><text x="570" y="754" class="v">11,788</text><text x="600" y="755" class="v">8,618</text><text x="629" y="709" class="v">98,608</text><text x="659" y="746" class="v">27,876</text><text x="689" y="751" class="v">16,288</text><text x="719" y="751" class="v">17,747</text><text x="747" y="741" class="v">37,491</text><text x="807" y="759" class="v">1</text>
</g>
<g>
<text x="62" y="772" class="a" style="fill:#666">B011</text><text x="92" y="772" class="a" style="fill:#4c9b50">HM11</text><text x="122" y="772" class="a" style="fill:#2e6e55">HM12</text><text x="152" y="772" class="a" style="fill:#55a88a">HM13</text><text x="182" y="772" class="a" style="fill:#4e6e62">HM14</text><text x="210" y="772" class="a" style="fill:#1e5a6e">H021</text><text x="241" y="772" class="a" style="fill:#7a8a3a">H022</text><text x="270" y="772" class="a" style="fill:#1e8a9a">J521</text><text x="301" y="772" class="a" style="fill:#9055b0">J522</text><text x="330" y="772" class="a" style="fill:#a8b040">J523</text><text x="360" y="772" class="a" style="fill:#58a888">J524</text><text x="390" y="772" class="a" style="fill:#5580a0">J525</text><text x="420" y="772" class="a" style="fill:#c09a40">J526</text><text x="450" y="772" class="a" style="fill:#1e5a68">J541</text><text x="479" y="772" class="a" style="fill:#1e8a90">J542</text><text x="509" y="772" class="a" style="fill:#5f90a8">J543</text><text x="539" y="772" class="a" style="fill:#2e7a70">J544</text><text x="569" y="772" class="a" style="fill:#4a9a80">J545</text><text x="599" y="772" class="a" style="fill:#285a68">J546</text><text x="628" y="772" class="a" style="fill:#5a5a20">S571</text><text x="658" y="772" class="a" style="fill:#3a8a80">W711</text><text x="688" y="772" class="a" style="fill:#50b050">W712</text><text x="718" y="772" class="a" style="fill:#c0a040">W713</text><text x="747" y="772" class="a" style="fill:#30a080">W714</text><text x="777" y="772" class="a" style="fill:#a0b030">WL10</text><text x="807" y="772" class="a" style="fill:#2a6070">YSPC</text>
</g>

<!-- Visitor -->
<rect x="725" y="791" width="6" height="8" fill="#2030c0"/><text x="734" y="799" class="l">yesterday</text>
<rect x="783" y="791" width="6" height="8" fill="#10b010"/><text x="792" y="799" class="l">today</text>
<path d="M49 821.500H822M49 847.500H822" stroke="#888" stroke-dasharray="1 1"/>
<path d="M49.500 821V871.500H822" stroke="#888" fill="none"/><path d="M46 821.500h3M46 847.500h3" stroke="#888"/>
<g clip-path="url(#cL)"><text x="42" y="829" class="e" style="font-size:11px">13,859k</text><text x="42" y="855" class="e" style="font-size:11px">6,930k</text></g>
<g fill="url(#gr5b)">
<rect x="405" y="868" width="29" height="3"/><rect x="438" y="852" width="29" height="19"/><rect x="470" y="846" width="29" height="25"/><rect x="502" y="820" width="29" height="51"/><rect x="534" y="862" width="29" height="9"/>
</g>
<g>
<text x="65" y="870" class="v">60</text><text x="97" y="870" class="v">60</text><text x="129" y="870" class="v">60</text><text x="161" y="870" class="v">60</text><text x="194" y="870" class="v">60</text><text x="226" y="870" class="v">60</text><text x="258" y="870" class="v">60</text><text x="290" y="870" class="v">60</text><text x="323" y="870" class="v">60</text><text x="355" y="870" class="v">82</text><text x="388" y="870" class="v">23,948</text><text x="419" y="867" class="v">595,829</text><text x="453" y="852" class="v">5,405,83</text><text x="480" y="846" class="v">7,118,69</text><text x="525" y="819" class="v">13,859,142</text><text x="548" y="861" class="v">2,470,082</text><text x="645" y="870" class="v">149,573</text><text x="678" y="870" class="v">138,546</text><text x="710" y="870" class="v">246,985</text><text x="742" y="870" class="v">71,885</text><text x="775" y="870" class="v">131,985</text><text x="806" y="870" class="v">88,787</text>
</g>
<g>
<text x="65" y="883" class="a">00H</text><text x="97" y="883" class="a">01H</text><text x="129" y="883" class="a">02H</text><text x="162" y="883" class="a">03H</text><text x="194" y="883" class="a">04H</text><text x="226" y="883" class="a">05H</text><text x="258" y="883" class="a">06H</text><text x="290" y="883" class="a">07H</text><text x="323" y="883" class="a">08H</text><text x="355" y="883" class="a">09H</text><text x="387" y="883" class="a">10H</text><text x="419" y="883" class="a">11H</text><text x="452" y="883" class="a">12H</text><text x="484" y="883" class="a">13H</text><text x="516" y="883" class="a">14H</text><text x="548" y="883" class="a" style="fill:#10a010">15H</text><text x="580" y="883" class="a">16H</text><text x="613" y="883" class="a">17H</text><text x="645" y="883" class="a">18H</text><text x="677" y="883" class="a">19H</text><text x="709" y="883" class="a">20H</text><text x="742" y="883" class="a">21H</text><text x="774" y="883" class="a">22H</text><text x="806" y="883" class="a">23H</text>
</g>

<!-- TPS -->
<rect x="1581" y="680" width="6" height="8" fill="#2030c0"/><text x="1589" y="688" class="l">yesterday</text>
<rect x="1640" y="680" width="6" height="8" fill="#10b010"/><text x="1649" y="688" class="l">today</text>
<path d="M877 709.500H1679M877 735.500H1679" stroke="#888" stroke-dasharray="1 1"/>
<path d="M877.500 709V760.500H1679" stroke="#888" fill="none"/><path d="M874 709.500h3M874 735.500h3" stroke="#888"/>
<text x="871" y="717" class="e" style="font-size:11px">915</text><text x="871" y="743" class="e" style="font-size:11px">457,5</text>
<g fill="url(#gr5)">
<rect x="1213" y="758" width="30" height="2"/><rect x="1246" y="744" width="30" height="16"/><rect x="1279" y="748" width="30" height="12"/><rect x="1313" y="742" width="30" height="18"/><rect x="1346" y="742" width="30" height="18"/><rect x="1380" y="739" width="30" height="21"/>
</g>
<g fill="url(#bu5)">
<rect x="1480" y="710" width="30" height="50"/><rect x="1513" y="732" width="30" height="28"/><rect x="1547" y="732" width="30" height="28"/><rect x="1580" y="734" width="30" height="26"/><rect x="1614" y="733" width="30" height="27"/><rect x="1647" y="735" width="30" height="25"/>
</g>
<g>
<text x="893" y="759" class="v">6</text><text x="926" y="759" class="v">6</text><text x="959" y="759" class="v">6</text><text x="993" y="759" class="v">6</text><text x="1026" y="759" class="v">6</text><text x="1060" y="759" class="v">5</text><text x="1093" y="759" class="v">5</text><text x="1126" y="759" class="v">5</text><text x="1160" y="759" class="v">5</text><text x="1194" y="759" class="v">12</text><text x="1227" y="757" class="v">46</text><text x="1261" y="743" class="v">302</text><text x="1294" y="747" class="v">229</text><text x="1327" y="741" class="v">351</text><text x="1360" y="742" class="v">334</text><text x="1394" y="738" class="v">398</text><text x="1495" y="709" class="v">915</text><text x="1527" y="731" class="v">527</text><text x="1561" y="731" class="v">536</text><text x="1595" y="733" class="v">489</text><text x="1628" y="732" class="v">507</text><text x="1661" y="734" class="v">471</text>
</g>
<g>
<text x="893" y="772" class="a">00H</text><text x="927" y="772" class="a">01H</text><text x="960" y="772" class="a">02H</text><text x="994" y="772" class="a">03H</text><text x="1027" y="772" class="a">04H</text><text x="1060" y="772" class="a">05H</text><text x="1094" y="772" class="a">06H</text><text x="1127" y="772" class="a">07H</text><text x="1161" y="772" class="a">08H</text><text x="1194" y="772" class="a">09H</text><text x="1227" y="772" class="a">10H</text><text x="1261" y="772" class="a">11H</text><text x="1294" y="772" class="a">12H</text><text x="1328" y="772" class="a">13H</text><text x="1361" y="772" class="a">14H</text><text x="1394" y="772" class="a" style="fill:#10a010">15H</text><text x="1428" y="772" class="a">16H</text><text x="1461" y="772" class="a">17H</text><text x="1495" y="772" class="a">18H</text><text x="1528" y="772" class="a">19H</text><text x="1561" y="772" class="a">20H</text><text x="1595" y="772" class="a">21H</text><text x="1628" y="772" class="a">22H</text><text x="1661" y="772" class="a">23H</text>
</g>

<!-- Call -->
<rect x="1581" y="791" width="6" height="8" fill="#2030c0"/><text x="1589" y="799" class="l">yesterday</text>
<rect x="1640" y="791" width="6" height="8" fill="#10b010"/><text x="1649" y="799" class="l">today</text>
<path d="M877 821.500H1679M877 847.500H1679" stroke="#888" stroke-dasharray="1 1"/>
<path d="M877.500 821V871.500H1679" stroke="#888" fill="none"/><path d="M874 821.500h3M874 847.500h3" stroke="#888"/>
<g clip-path="url(#cR)"><text x="871" y="829" class="e" style="font-size:11px">2,721k</text><text x="871" y="855" class="e" style="font-size:11px">1,361k</text></g>
<g fill="url(#gr5b)">
<rect x="1246" y="868" width="30" height="3"/><rect x="1279" y="852" width="30" height="19"/><rect x="1313" y="847" width="30" height="24"/><rect x="1346" y="820" width="30" height="51"/><rect x="1380" y="862" width="30" height="9"/>
</g>
<g fill="url(#bu5b)">
<rect x="1480" y="859" width="30" height="12"/><rect x="1513" y="840" width="30" height="31"/><rect x="1547" y="847" width="30" height="24"/><rect x="1580" y="868" width="30" height="3"/><rect x="1614" y="868" width="30" height="3"/><rect x="1647" y="870" width="30" height="1"/>
</g>
<g>
<text x="893" y="870" class="v">11,600</text><text x="926" y="870" class="v">11,635</text><text x="959" y="870" class="v">11,580</text><text x="993" y="870" class="v">11,618</text><text x="1026" y="870" class="v">11,592</text><text x="1060" y="870" class="v">11,523</text><text x="1093" y="870" class="v">11,609</text><text x="1126" y="870" class="v">11,619</text><text x="1160" y="870" class="v">11,602</text><text x="1190" y="870" class="v">9,831</text><text x="1223" y="870" class="v">18,843</text><text x="1259" y="867" class="v">166,414</text><text x="1294" y="851" class="v">1,070,50</text><text x="1328" y="846" class="v">1,328,85</text><text x="1361" y="819" class="v">2,721,284</text><text x="1394" y="861" class="v">521,279</text><text x="1495" y="858" class="v">683,689</text><text x="1528" y="839" class="v">1,691,812</text><text x="1561" y="846" class="v">1,373,576</text><text x="1594" y="867" class="v">17,125</text><text x="1628" y="867" class="v">271,549</text><text x="1661" y="869" class="v">77,718</text>
</g>
<g>
<text x="893" y="883" class="a">00H</text><text x="927" y="883" class="a">01H</text><text x="960" y="883" class="a">02H</text><text x="994" y="883" class="a">03H</text><text x="1027" y="883" class="a">04H</text><text x="1060" y="883" class="a">05H</text><text x="1094" y="883" class="a">06H</text><text x="1127" y="883" class="a">07H</text><text x="1161" y="883" class="a">08H</text><text x="1194" y="883" class="a">09H</text><text x="1227" y="883" class="a">10H</text><text x="1261" y="883" class="a">11H</text><text x="1294" y="883" class="a">12H</text><text x="1328" y="883" class="a">13H</text><text x="1361" y="883" class="a">14H</text><text x="1394" y="883" class="a" style="fill:#10a010">15H</text><text x="1428" y="883" class="a">16H</text><text x="1461" y="883" class="a">17H</text><text x="1495" y="883" class="a">18H</text><text x="1528" y="883" class="a">19H</text><text x="1561" y="883" class="a">20H</text><text x="1595" y="883" class="a">21H</text><text x="1628" y="883" class="a">22H</text><text x="1661" y="883" class="a">23H</text>
</g>

<!-- annotation -->
<circle cx="80" cy="40" r="22" fill="none" stroke="#0a0af0" stroke-width="3.500" stroke-dasharray="8 4.500"/>
<path d="M102 57h20v4h-17v19h-3z" fill="#0a0af0"/>
<path d="M103 62L189 128L177 139Z" fill="#0a0af0"/>
</svg>
</body></html>
